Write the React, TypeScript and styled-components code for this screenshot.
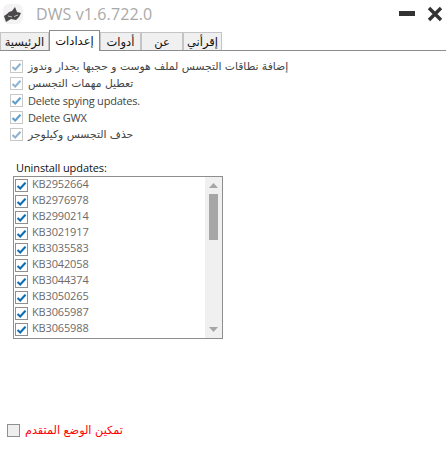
import React from 'react';
import styled, { createGlobalStyle } from 'styled-components';

const GlobalStyle = createGlobalStyle`
  html, body {
    margin: 0;
    padding: 0;
    background: #fff;
  }
  body {
    font-family: "Open Sans", "DejaVu Sans", sans-serif;
    font-size: 11px;
  }
`;

const Window = styled.div`
  width: 446px;
  height: 450px;
  display: flex;
  flex-direction: column;
  background: #fff;
  overflow: hidden;
`;

const TitleBar = styled.div`
  height: 30px;
  display: flex;
  align-items: center;
  padding: 0 3px 0 3px;
  flex: none;
`;

const LogoBox = styled.div`
  width: 20px;
  height: 20px;
  display: flex;
  align-items: center;
  justify-content: center;
  background: #f3f3f3;
  border-radius: 6px;
  margin-top: -2px;
`;

const Title = styled.div`
  margin-left: 13px;
  font-family: "Open Sans", sans-serif;
  font-size: 16px;
  letter-spacing: 0.1px;
  color: #a9a9a9;
  margin-top: -3px;
`;

const Spacer = styled.div`
  flex: 1;
`;

const WindowButtons = styled.div`
  display: flex;
  align-items: center;
  gap: 12px;
  margin-top: -3px;
`;

const TabStrip = styled.div`
  height: 21px;
  box-sizing: border-box;
  display: flex;
  align-items: flex-end;
  border-bottom: 1px solid #8c8c8c;
  flex: none;
`;

const Tab = styled.div<{ $width: number; $active?: boolean }>`
  width: ${(p) => p.$width}px;
  height: ${(p) => (p.$active ? 21 : 18)}px;
  box-sizing: border-box;
  display: flex;
  align-items: center;
  justify-content: center;
  background: ${(p) => (p.$active ? '#fff' : '#f0f0f0')};
  border: 1px solid ${(p) => (p.$active ? '#8c8c8c' : '#c4c4c4')};
  border-bottom: ${(p) => (p.$active ? 'none' : '0')};
  font-family: "DejaVu Sans", sans-serif;
  font-size: 11.5px;
  color: #111;
  margin-bottom: ${(p) => (p.$active ? '-1px' : '0')};
  position: relative;
`;

const OptionList = styled.div`
  display: flex;
  flex-direction: column;
  padding: 7px 0 0 10px;
`;

const OptionRow = styled.div`
  height: 17px;
  display: flex;
  align-items: center;
  gap: 5px;
  color: #444;
  font-size: 11px;
  letter-spacing: -0.2px;
  white-space: nowrap;
`;

const ArabicText = styled.span`
  font-family: "DejaVu Sans", sans-serif;
  font-size: 10.75px;
  letter-spacing: 0;
  color: #444;
`;

const Box = styled.span<{ $faded?: boolean; $empty?: boolean }>`
  width: 13px;
  height: 13px;
  box-sizing: border-box;
  flex: none;
  display: inline-flex;
  align-items: center;
  justify-content: center;
  border: 1px solid ${(p) => (p.$faded ? '#c8c8c8' : '#8f8f8f')};
  background: ${(p) => (p.$empty ? '#efefef' : '#fff')};
`;

const ListLabel = styled.div`
  margin: 17px 0 0 16px;
  height: 16px;
  line-height: 16px;
  color: #111;
  font-size: 11px;
  letter-spacing: -0.1px;
`;

const ListBox = styled.div`
  margin: 0 0 0 13px;
  width: 210px;
  height: 163px;
  box-sizing: border-box;
  border: 1px solid #8e8e8e;
  display: flex;
  overflow: hidden;
`;

const ListRows = styled.div`
  flex: 1;
  display: flex;
  flex-direction: column;
  padding: 0 0 0 1px;
`;

const ListRow = styled.div`
  height: 16px;
  flex: none;
  display: flex;
  align-items: center;
  gap: 4px;
  color: #6b6b6b;
  font-size: 11px;
  letter-spacing: -0.15px;
  line-height: 16px;
`;

const ListRowText = styled.span`
  padding-bottom: 2px;
`;

const ScrollBar = styled.div`
  width: 17px;
  flex: none;
  background: #f0f0f0;
  display: flex;
  flex-direction: column;
  align-items: center;
  border-left: 1px solid #fff;
`;

const ScrollArrow = styled.div`
  height: 17px;
  display: flex;
  align-items: center;
  justify-content: center;
  flex: none;
`;

const ScrollThumb = styled.div`
  width: 9px;
  height: 46px;
  background: #a6a6a6;
  flex: none;
`;

const Footer = styled.div`
  margin-top: auto;
  margin-bottom: 13px;
  padding-left: 7px;
  display: flex;
  align-items: center;
  gap: 5px;
`;

const AdvancedText = styled.span`
  font-family: "DejaVu Sans", sans-serif;
  font-size: 11.25px;
  color: #f00;
`;

const Check = ({ color }: { color: string }) => (
  <svg width="11" height="11" viewBox="0 0 11 11">
    <path d="M1.5 6 L4.2 8.5 L9.5 2.8" fill="none" stroke={color} strokeWidth="2.1" />
  </svg>
);

// skewed crown shape, rising to the right
const Logo = () => (
  <svg width="20" height="20" viewBox="0 0 20 20">
    <path
      d="M1 12 L4 10 L6 8 L9 7 L12 3 L14 8 L18 9 L16 13 L13 16 L8 15 L3 18 Z"
      fill="#4a484a"
    />
    <path d="M5 12 L9 13 M11 12.5 L15 11" stroke="#c4c4c4" strokeWidth="1" />
  </svg>
);

const tabs = [
  { label: 'الرئيسية', width: 49 },
  { label: 'إعدادات', width: 51, active: true },
  { label: 'أدوات', width: 41 },
  { label: 'عن', width: 42 },
  { label: 'إقرأني', width: 39 },
];

const updates = [
  'KB2952664',
  'KB2976978',
  'KB2990214',
  'KB3021917',
  'KB3035583',
  'KB3042058',
  'KB3044374',
  'KB3050265',
  'KB3065987',
  'KB3065988',
];

const App = () => {
  return (
    <Window>
      <GlobalStyle />
      <TitleBar>
        <LogoBox>
          <Logo />
        </LogoBox>
        <Title>DWS v1.6.722.0</Title>
        <Spacer />
        <WindowButtons>
          <svg width="16" height="5" viewBox="0 0 16 5">
            <rect x="0" y="0" width="16" height="5" fill="#333" />
          </svg>
          <svg width="16" height="16" viewBox="0 0 16 16">
            <path d="M2 2 L14 14 M14 2 L2 14" stroke="#333" strokeWidth="3.4" />
          </svg>
        </WindowButtons>
      </TitleBar>

      <TabStrip>
        {tabs.map((tab) => (
          <Tab key={tab.label} $width={tab.width} $active={tab.active}>
            {tab.label}
          </Tab>
        ))}
      </TabStrip>

      <OptionList>
        <OptionRow>
          <Box $faded>
            <Check color="#8fb4d2" />
          </Box>
          <ArabicText>إضافة نطاقات التجسس لملف هوست و حجبها بجدار وندوز</ArabicText>
        </OptionRow>
        <OptionRow>
          <Box $faded>
            <Check color="#8fb4d2" />
          </Box>
          <ArabicText>تعطيل مهمات التجسس</ArabicText>
        </OptionRow>
        <OptionRow>
          <Box $faded>
            <Check color="#5f9dcb" />
          </Box>
          Delete spying updates.
        </OptionRow>
        <OptionRow>
          <Box $faded>
            <Check color="#5f9dcb" />
          </Box>
          Delete GWX
        </OptionRow>
        <OptionRow>
          <Box $faded>
            <Check color="#8fb4d2" />
          </Box>
          <ArabicText>حذف التجسس وكيلوجر</ArabicText>
        </OptionRow>
      </OptionList>

      <ListLabel>Uninstall updates:</ListLabel>
      <ListBox>
        <ListRows>
          {updates.map((kb) => (
            <ListRow key={kb}>
              <Box>
                <Check color="#0a6fb5" />
              </Box>
              <ListRowText>{kb}</ListRowText>
            </ListRow>
          ))}
        </ListRows>
        <ScrollBar>
          <ScrollArrow>
            <svg width="9" height="5" viewBox="0 0 9 5">
              <path d="M0 5 L4.5 0 L9 5 Z" fill="#a6a6a6" />
            </svg>
          </ScrollArrow>
          <ScrollThumb />
          <Spacer />
          <ScrollArrow>
            <svg width="9" height="5" viewBox="0 0 9 5">
              <path d="M0 0 L4.5 5 L9 0 Z" fill="#a6a6a6" />
            </svg>
          </ScrollArrow>
        </ScrollBar>
      </ListBox>

      <Footer>
        <Box $empty />
        <AdvancedText>تمكين الوضع المتقدم</AdvancedText>
      </Footer>
    </Window>
  );
};

export default App;
